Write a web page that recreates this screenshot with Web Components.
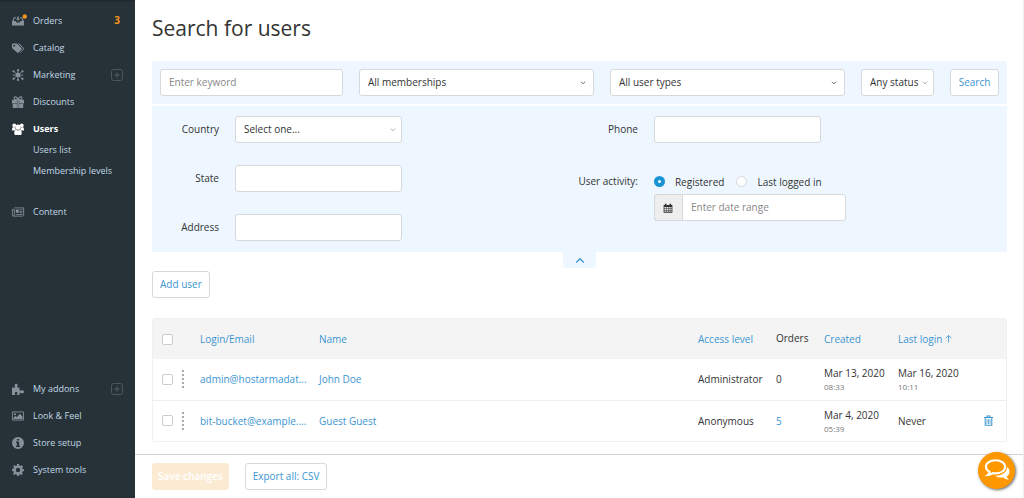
<!DOCTYPE html>
<html lang="en">
<head>
<meta charset="utf-8">
<meta name="viewport" content="width=device-width, initial-scale=1">
<title>Search for users</title>
<style>
html, body { margin: 0; }
body {
  font: 10px/16px "Open Sans", "Noto Sans", sans-serif;
  color: #333;
  background: #fff;
  --link: #3c95d2;
  --line: #d6d8da;
  --panel: #eef7ff;
  --control: 27px;
}
</style>
</head>
<body>
<admin-app></admin-app>
<script>
const define = (name, html, setup) => {
  const template = document.createElement('template');
  template.innerHTML = `<style>*{box-sizing:border-box}button,input,select{font:inherit;color:inherit;margin:0}a{color:var(--link);text-decoration:none}</style>` + html;
  customElements.define(name, class extends HTMLElement {
    constructor() {
      super();
      this.attachShadow({ mode: 'open' }).append(template.content.cloneNode(true));
    }
    connectedCallback() { if (setup) setup(this, this.shadowRoot); }
  });
};

const icons = {
  orders: '<path d="M2.500 3h3v1.300H3.600L2 8h3l1 2h4l1-2h3l-1.600-3.700H10.800V3h2.700L16 8.500V14H0V8.500z"/><path d="M7 2h2v3h1.800L8 7.800 5.200 5H7z"/><circle cx="17" cy="2" r="2.900" fill="#f7941e"/>',
  catalog: '<path fill-rule="evenodd" d="M0 3.500C0 2.700.700 2 1.500 2h4.300l1.400.600 5.500 5.600c.600.600.600 1.400 0 2l-3.900 3.900c-.600.600-1.400.600-2 0L.600 8.500 0 7.200zM3 6.300a1.300 1.300 0 1 0 0-2.600 1.300 1.300 0 0 0 0 2.600z"/><path d="M7.800 2h1.400l1.300.600 5.100 5.500c.600.600.600 1.400 0 2l-3.800 4c-.400.400-.900.500-1.400.300l3.900-4c.700-.800.700-1.700 0-2.500z"/>',
  marketing: '<circle cx="8" cy="8" r="3.200"/><path d="M8 2v12M2 3l12 10M14 3 2 13M1 8h14" stroke="currentColor" stroke-width="1.100"/><circle cx="8" cy="1.500" r="1.500"/><circle cx="8" cy="14.500" r="1.500"/><circle cx="2" cy="3" r="1.500"/><circle cx="14" cy="3" r="1.500"/><circle cx="2" cy="13" r="1.500"/><circle cx="14" cy="13" r="1.500"/>',
  discounts: '<path d="M0 5h6.500v5H0zM9.500 5H16v5H9.500zM1 10.500h5.500V16H2c-.600 0-1-.400-1-1zM9.500 10.500H15V15c0 .600-.400 1-1 1H9.500zM7 5h2v11H7z"/><path d="M8 5C7 2 5.500 1 4.200 1 2.300 1 2.300 4.500 4.500 4.800zM8 5c1-3 2.500-4 3.800-4 1.900 0 1.900 3.500-.300 3.800z" fill="none" stroke="currentColor" stroke-width="1.500"/>',
  users: '<circle cx="3" cy="3" r="2.500"/><circle cx="13" cy="3" r="2.500"/><circle cx="8" cy="5.500" r="3.500"/><path d="M0 9.500c0-3 1-4.500 2.500-4 .700.400 1.200.400 1.600.3 0 1.300.300 2.300 1 3L3 10H1c-.600 0-1-.200-1-.500zM16 9.500c0-3-1-4.500-2.500-4-.700.400-1.200.400-1.600.3 0 1.300-.300 2.300-1 3L13 10h2c.600 0 1-.200 1-.500zM3 13.500C3 10.500 4 9 5.300 9c1.700 1.200 3.700 1.200 5.400 0C12 9 13 10.500 13 13.500c0 1.600-1 2.500-2.500 2.500h-5C4 16 3 15.100 3 13.500z"/>',
  content: '<path d="M3 2.500h12.500v9.700c0 .800-.600 1.300-1.300 1.300H2c-.900 0-1.500-.500-1.500-1.300V4.500H3v7.500c0 .900-.500 1.500-1.200 1.500" fill="none" stroke="currentColor" stroke-width="1.100"/><path d="M5 4.500h4V9H5zM10 4.500h4v1h-4zM10 6.500h4v1h-4zM10 8.500h4v1h-4zM5 10.500h9v1H5z"/>',
  addons: '<path d="M0 6h4.200c.500-.900-.700-1.200-.7-2.800C3.500 1.900 4.300 1 5.500 1s2 .900 2 2.200C7.500 4.800 6.300 5.100 6.800 6H10v4.200c.900.500 1.200-.7 2.800-.7 1.300 0 3.200.600 3.200 2s-1.300 2.200-2.500 2.200c-1.500 0-2.600-1.200-3.500-.7v3H6.500c-.500-.900.700-1.200.7-2.300 0-1-.700-1.700-1.700-1.700s-1.800.7-1.800 1.700c0 1.100 1.200 1.400.700 2.300H0z"/>',
  look: '<path d="M.600 2.600h14.800v10.800H.600z" fill="none" stroke="currentColor" stroke-width="1.200"/><circle cx="4" cy="5.700" r="1.400"/><path d="M2 12v-2l2.500-2 1.700 1.500L10.500 5 14 8.500V12z"/>',
  info: '<path fill-rule="evenodd" d="M8 0a8 8 0 1 1 0 16A8 8 0 0 1 8 0zM6.500 2.500v2.300h3V2.500zM5.300 6v1.800h1.200v3.700H5.300v1.800h5.400v-1.800H9.500V6z"/>',
  gear: '<path fill-rule="evenodd" d="M6.700 0h2.600l.5 2.200 1.300.6L13 1.500l1.700 1.800-1.200 1.900.5 1.400 2 .4v2.400l-2.100.5-.6 1.400 1.200 1.800-1.700 1.700-1.900-1.200-1.300.6L9.200 16H6.800l-.5-2-1.400-.6L3 14.600l-1.700-1.700 1.200-1.900L2 9.800l-2-.5V6.800l2.100-.4.500-1.300-1.200-1.900L3.100 1.500 5 2.700l1.300-.5zM8 5a3 3 0 1 0 0 6 3 3 0 0 0 0-6z"/>',
  chevron: '<path d="M3.500 5.500l4.500 4 4.500-4" fill="none" stroke="currentColor" stroke-width="1.800"/>',
  up: '<path d="M2 12l6-6 6 6" fill="none" stroke="currentColor" stroke-width="2"/>',
  plus: '<rect x=".7" y=".7" width="14.600" height="14.600" rx="3" fill="none" stroke="currentColor"/><path d="M8 4.500v7M4.500 8h7" stroke="currentColor" stroke-width="1.200"/>',
  calendar: '<path fill-rule="evenodd" d="M1 3h2V1h2.500v2h5V1H13v2h2v12.500H1zM2.300 6.300v2h2.400v-2zm3.300 0v2H8v-2zm3.200 0v2h2.100v-2zm3 0v2h2v-2zM2.300 9.200v2h2.400v-2zm3.300 0v2H8v-2zm3.200 0v2h2.100v-2zm3 0v2h2v-2zM2.300 12.100v2h2.400v-2zm3.300 0v2H8v-2zm3.200 0v2h2.100v-2zm3 0v2h2v-2z"/>',
  trash: '<path d="M1.500 3.700h13M5.800 3.500V1.300h4.400v2.200M3.200 4v10.800h9.600V4" fill="none" stroke="currentColor" stroke-width="1.500"/><path d="M5.800 6v7M8 6v7M10.200 6v7" stroke="currentColor" stroke-width="1.100"/>',
  sort: '<path d="M8 15V2.500M3 7.500l5-5 5 5" fill="none" stroke="currentColor" stroke-width="1.500"/>',
  chat: '<path fill="none" stroke="currentColor" stroke-width="1.400" d="M7 .8c3.700 0 6.400 1.900 6.400 4.400S10.700 9.600 7 9.600c-.7 0-1.300-.1-1.900-.2-1 .8-2.100 1.200-3.300 1.300.7-.6 1.200-1.300 1.300-2.100C1.500 7.800.6 6.600.6 5.200.6 2.700 3.300.800 7 .8z"/><path d="M14.700 5.300c1.100.8 1.700 1.800 1.700 3 0 1.400-.7 2.500-1.900 3.300.2.900.8 1.600 1.500 2.200-1.500-.1-2.700-.6-3.700-1.500-2.200.3-4.300-.1-5.600-1.200 4.400.3 8-2.200 8-5.800z"/>'
};

define('app-icon', `<style>:host{display:block;width:12px;height:12px;flex:none}svg{display:block;width:100%;height:100%;overflow:visible;fill:currentColor}</style><svg viewBox="0 0 16 16" aria-hidden="true"></svg>`,
  (host, root) => { root.querySelector('svg').innerHTML = icons[host.getAttribute('name')] || ''; });

define('nav-item', `<style>
:host{display:block}
a{display:flex;align-items:center;gap:9px;height:17px;padding:0 12px;color:#c3d8e6}
app-icon{color:#879199}
:host([active]) a{color:#fff;font-weight:700}
:host([active]) app-icon{color:#fff}
:host([sub]) app-icon{display:none}
:host([sub]) a{padding-left:33px}
slot[name=end]{display:block;margin-left:auto}
span{flex:1;white-space:nowrap}
</style><a href="#"><app-icon></app-icon><span><slot></slot></span><slot name="end"></slot></a>`,
  (host, root) => {
    const old = root.querySelector('app-icon');
    const icon = document.createElement('app-icon');
    icon.setAttribute('name', host.getAttribute('icon') || '');
    old.replaceWith(icon);
  });

define('side-bar', `<style>
:host{display:flex;flex-direction:column;justify-content:space-between;background:#263238;border-top:2px solid #20292f;padding:10px 0 20px;font-size:9px}
nav{display:grid;grid-template-columns:minmax(0,1fr);gap:10px}
.group{display:grid;grid-template-columns:minmax(0,1fr);gap:4px}
.content{margin-top:14px}
b{color:#f7941e;font-size:10px;padding-right:3px}
app-icon{color:#58646b}
</style>
<nav aria-label="Main">
<nav-item icon="orders">Orders<b slot="end">3</b></nav-item>
<nav-item icon="catalog">Catalog</nav-item>
<nav-item icon="marketing">Marketing<app-icon slot="end" name="plus"></app-icon></nav-item>
<nav-item icon="discounts">Discounts</nav-item>
<div class="group"><nav-item icon="users" active>Users</nav-item><nav-item sub>Users list</nav-item><nav-item sub>Membership levels</nav-item></div>
<nav-item class="content" icon="content">Content</nav-item>
</nav>
<nav aria-label="Settings">
<nav-item icon="addons">My addons<app-icon slot="end" name="plus"></app-icon></nav-item>
<nav-item icon="look">Look &amp; Feel</nav-item>
<nav-item icon="info">Store setup</nav-item>
<nav-item icon="gear">System tools</nav-item>
</nav>`);

define('ui-button', `<style>
:host{display:inline-block}
button{display:block;width:100%;height:var(--control);padding:0 7px 1px;border:1px solid var(--line);border-radius:3px;background:#fff;color:var(--link);white-space:nowrap}
:host([muted]) button{background:#fcebd3;border-color:#fcebd3;color:#fff;font-weight:600;padding:0 5px 1px}
</style><button type="button"><slot></slot></button>`,
  (host, root) => { root.querySelector('button').disabled = host.hasAttribute('muted'); });

define('ui-select', `<style>
:host{display:grid}
select,app-icon{grid-area:1/1}
select{appearance:none;width:100%;height:var(--control);padding:0 12px 2px 8px;border:1px solid var(--line);border-radius:3px;background:#fff}
app-icon{width:8px;height:8px;place-self:center end;margin-right:7px;pointer-events:none;color:#666}
:host([light]) app-icon{color:#aaa;margin-right:5px}
</style><select><option></option></select><app-icon name="chevron"></app-icon>`,
  (host, root) => {
    root.querySelector('option').textContent = host.getAttribute('value');
    root.querySelector('select').setAttribute('aria-label', host.getAttribute('label') || host.getAttribute('value'));
  });

define('ui-input', `<style>
:host{display:block}
input{display:block;width:100%;height:var(--control);padding:0 8px 2px;border:1px solid var(--line);border-radius:3px;background:#fff}
input::placeholder{color:#888;opacity:1}
:host([joined]) input{border-radius:0 3px 3px 0}
</style><input type="text">`,
  (host, root) => {
    const input = root.querySelector('input');
    input.placeholder = host.getAttribute('placeholder') || '';
    input.setAttribute('aria-label', host.getAttribute('label') || input.placeholder);
  });

define('form-row', `<style>
:host{display:grid;grid-template-columns:67px 167px;gap:16px;align-items:center}
label{text-align:right;white-space:nowrap;padding-bottom:2px}
input,select{appearance:none;width:100%;height:var(--control);padding:0 8px 2px;border:1px solid var(--line);border-radius:3px;background:#fff}
.box{display:grid}
.box>*{grid-area:1/1}
app-icon{width:8px;height:8px;place-self:center end;margin-right:5px;pointer-events:none;color:#aaa}
</style><label for="field"></label><div class="box"></div>`,
  (host, root) => {
    root.querySelector('label').textContent = host.getAttribute('label');
    const value = host.getAttribute('select');
    root.querySelector('.box').innerHTML = value
      ? `<select id="field"><option>${value}</option></select><app-icon name="chevron"></app-icon>`
      : '<input id="field" type="text">';
  });

define('user-activity', `<style>
:host{display:grid;grid-template-columns:67px 192px;gap:16px}
.title{text-align:right;white-space:nowrap;line-height:17px}
.radios{display:flex;height:17px;gap:12px;margin-bottom:4px}
label{display:flex;align-items:center;gap:10px;white-space:nowrap}
input{appearance:none;width:11px;height:11px;border:1px solid var(--line);border-radius:50%;background:#fff}
input:checked{border:4px solid #1a93d5}
.range{display:grid;grid-template-columns:28px 1fr}
.cal{display:grid;place-items:center;background:#eee;border:1px solid var(--line);border-right:0;border-radius:3px 0 0 3px}
.cal app-icon{width:10px;height:10px}
</style><div class="title" id="t">User activity:</div><div role="radiogroup" aria-labelledby="t">
<div class="radios"><label><input type="radio" name="activity" checked>Registered</label><label><input type="radio" name="activity">Last logged in</label></div>
<div class="range"><span class="cal"><app-icon name="calendar"></app-icon></span><ui-input joined placeholder="Enter date range"></ui-input></div></div>`);

define('search-panel', `<style>
:host{display:block}
.top{display:grid;grid-template-columns:183fr 235fr 235fr 73px 49px;gap:16px;padding:8px;background:var(--panel);border-radius:3px 3px 0 0}
.more{display:grid;grid-template-columns:49fr 51fr;margin-top:2px;padding:10px 0 11px;background:var(--panel);align-items:start}
.col{display:grid;gap:22px}
.right{gap:30px}
.toggle{display:grid;place-items:center;width:33px;height:16px;margin:0 auto;padding:0;border:0;background:var(--panel);color:var(--link);border-radius:0 0 3px 3px}
.toggle app-icon{width:10px;height:10px}
</style>
<div class="top"><ui-input placeholder="Enter keyword"></ui-input><ui-select value="All memberships"></ui-select><ui-select value="All user types"></ui-select><ui-select light value="Any status"></ui-select><ui-button>Search</ui-button></div>
<div class="more"><div class="col"><form-row label="Country" select="Select one..."></form-row><form-row label="State"></form-row><form-row label="Address"></form-row></div>
<div class="col right"><form-row label="Phone"></form-row><user-activity></user-activity></div></div>
<button class="toggle" type="button" aria-label="Collapse filters"><app-icon name="up"></app-icon></button>`);

define('user-table', `<style>
:host{display:block;border:1px solid #f0f0f0;border-radius:3px;overflow:hidden}
table{width:100%;table-layout:fixed;border-collapse:collapse}
th,td{text-align:left;font-weight:400;padding:0 8px;white-space:nowrap;height:41px}
th{background:#f4f4f4;padding-bottom:2px;height:40px}
tbody tr+tr{border-top:1px solid #eee}
.pick{width:39px}.login{width:119px}.access{width:78px}.orders{width:48px}.created{width:74px}.last{width:84px}.act{width:32px}
.flex{display:flex;align-items:center;gap:9px}
input{appearance:none;width:11px;height:11px;border:1px solid #ccc;border-radius:2px;background:#fff;flex:none}
.grip{height:18px;border-left:2px dotted #aaa}
td:first-child,th:first-child{padding:0 0 0 9px}
td:last-child{padding:0 0 0 9px}
small{display:block;font-size:8px;line-height:12px;color:#777}
.date{line-height:16px}
th a{display:inline-flex;align-items:center;gap:2px;vertical-align:middle}
th app-icon{width:9px;height:9px}
td button{display:block;border:0;padding:0;background:none;color:var(--link)}
td button app-icon{width:11px;height:11px}
</style><table><thead><tr>
<th class="pick"><div class="flex"><input type="checkbox" aria-label="Select all users"></div></th>
<th class="login"><a href="#">Login/Email</a></th><th><a href="#">Name</a></th><th class="access"><a href="#">Access level</a></th><th class="orders">Orders</th><th class="created"><a href="#">Created</a></th><th class="last"><a href="#">Last login<app-icon name="sort"></app-icon></a></th><th class="act"></th></tr></thead>
<tbody><tr><td><div class="flex"><input type="checkbox" aria-label="Select John Doe"><i class="grip"></i></div></td><td><a href="#">admin@hostarmadat...</a></td><td><a href="#">John Doe</a></td><td>Administrator</td><td>0</td><td class="date">Mar 13, 2020<small>08:33</small></td><td class="date">Mar 16, 2020<small>10:11</small></td><td></td></tr>
<tr><td><div class="flex"><input type="checkbox" aria-label="Select Guest Guest"><i class="grip"></i></div></td><td><a href="#">bit-bucket@example....</a></td><td><a href="#">Guest Guest</a></td><td>Anonymous</td><td><a href="#">5</a></td><td class="date">Mar 4, 2020<small>05:39</small></td><td>Never</td><td><button type="button" aria-label="Delete user"><app-icon name="trash"></app-icon></button></td></tr></tbody></table>`);

define('chat-button', `<style>
:host{display:block;position:fixed;right:9px;bottom:9px}
button{display:grid;place-items:center;width:37px;height:37px;border:0;padding:0;border-radius:50%;background:#ff9800;color:#fff;box-shadow:1px 1px 3px #0009}
app-icon{width:24px;height:24px}
</style><button type="button" aria-label="Open chat"><app-icon name="chat"></app-icon></button>`);

define('admin-app', `<style>
:host{display:grid;grid-template-columns:135px minmax(0,1fr);min-height:100vh}
.page{display:flex;flex-direction:column;border-right:1px solid #eee}
main{flex:1;padding:14px 16px 12px 17px}
h1{margin:0 0 19px;font-size:21px;line-height:28px;font-weight:400}
.add{display:block;width:fit-content;margin:3px 0 20px}
footer{display:flex;gap:16px;padding:8px 17px;border-top:1px solid #d4d4d4}
</style><side-bar></side-bar><div class="page"><main><h1>Search for users</h1><search-panel></search-panel><ui-button class="add">Add user</ui-button><user-table></user-table></main>
<footer><ui-button muted>Save changes</ui-button><ui-button>Export all: CSV</ui-button></footer></div><chat-button></chat-button>`);
</script>
</body>
</html>
